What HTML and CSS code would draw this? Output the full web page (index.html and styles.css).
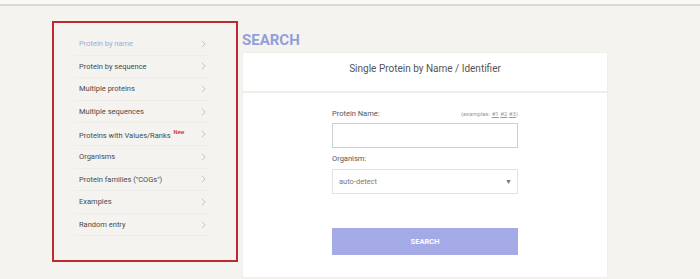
FILE: index.html
```html
<!DOCTYPE html>
<html>
<head>
<meta charset="utf-8">
<link rel="stylesheet" href="styles.css">
</head>
<body>
<div class="topbar"></div>
<div class="main">
  <nav class="sidebar">
    <ul class="menu">
      <li class="item active"><span>Protein by name</span><svg class="chev" viewBox="0 0 6 10"><polyline points="1,1 5,5 1,9"/></svg></li>
      <li class="item"><span>Protein by sequence</span><svg class="chev" viewBox="0 0 6 10"><polyline points="1,1 5,5 1,9"/></svg></li>
      <li class="item"><span>Multiple proteins</span><svg class="chev" viewBox="0 0 6 10"><polyline points="1,1 5,5 1,9"/></svg></li>
      <li class="item"><span>Multiple sequences</span><svg class="chev" viewBox="0 0 6 10"><polyline points="1,1 5,5 1,9"/></svg></li>
      <li class="item"><span>Proteins with Values/Ranks <sup class="new">New</sup></span><svg class="chev" viewBox="0 0 6 10"><polyline points="1,1 5,5 1,9"/></svg></li>
      <li class="item"><span>Organisms</span><svg class="chev" viewBox="0 0 6 10"><polyline points="1,1 5,5 1,9"/></svg></li>
      <li class="item"><span>Protein families ("COGs")</span><svg class="chev" viewBox="0 0 6 10"><polyline points="1,1 5,5 1,9"/></svg></li>
      <li class="item"><span>Examples</span><svg class="chev" viewBox="0 0 6 10"><polyline points="1,1 5,5 1,9"/></svg></li>
      <li class="item"><span>Random entry</span><svg class="chev" viewBox="0 0 6 10"><polyline points="1,1 5,5 1,9"/></svg></li>
    </ul>
  </nav>
  <section class="content">
    <h1 class="heading">SEARCH</h1>
    <div class="card">
      <div class="card-head">Single Protein by Name / Identifier</div>
      <form class="form">
        <div class="label-row">
          <label class="label">Protein Name:</label>
          <span class="examples">(examples: <a>#1</a> <a>#2</a> <a>#3</a>)</span>
        </div>
        <div class="input"></div>
        <div class="label-row organism">
          <label class="label">Organism:</label>
        </div>
        <div class="select"><span>auto-detect</span><span class="arrow">▼</span></div>
        <div class="button">SEARCH</div>
      </form>
    </div>
  </section>
</div>
</body>
</html>
```
FILE: styles.css
```css
* { box-sizing: border-box; }
body {
  margin: 0;
  background: #f5f3ef;
  font-family: Roboto, "Liberation Sans", sans-serif;
  color: #444;
  height: 279px;
  overflow: hidden;
}
.topbar {
  height: 6px;
  background: #faf9f6;
  border-bottom: 2px solid #dcd9d3;
}
.main {
  display: flex;
  padding: 15px 0 0 52px;
  gap: 4px;
}
.sidebar {
  width: 186px;
  height: 241px;
  border: 2px solid #c0282e;
  padding: 10px 0 0 20px;
}
.menu {
  list-style: none;
  margin: 0;
  padding: 0;
  width: 136px;
}
.item {
  display: flex;
  align-items: center;
  justify-content: space-between;
  height: 22.6px;
  padding: 0 4px 0 5px;
  font-size: 7.5px;
  color: #4a4a4a;
  border-bottom: 1px solid #eeece7;
}
.item.active { color: #a3a8dc; }
.new {
  color: #d2232a;
  font-size: 5.5px;
  font-weight: 500;
  vertical-align: 4px;
  margin-left: 1px;
}
.chev {
  width: 5px;
  height: 8px;
  fill: none;
  stroke: #b9b7b3;
  stroke-width: 1;
}
.content {
  width: 366px;
}
.heading {
  margin: 10px 0 3px 0;
  font-size: 15px;
  line-height: 18px;
  font-weight: 700;
  color: #939fd9;
}
.card {
  background: #fff;
  border: 1px solid #efeeeb;
  height: 226px;
}
.card-head {
  height: 40px;
  padding-top: 9px;
  text-align: center;
  font-size: 10px;
  line-height: 14px;
  color: #555;
  border-bottom: 2px solid #efeeeb;
}
.form {
  width: 186px;
  margin: 0 auto;
  padding-top: 15px;
}
.label-row {
  display: flex;
  justify-content: space-between;
  align-items: baseline;
  height: 12px;
  line-height: 12px;
  margin-bottom: 3px;
}
.label-row.organism { margin-top: 5px; margin-bottom: 4px; }
.label {
  font-size: 7.5px;
  color: #555;
}
.examples {
  font-size: 6px;
  color: #9a9a9a;
}
.examples a { text-decoration: underline; color: #9a9a9a; }
.input {
  height: 25px;
  border: 1px solid #cfcfcf;
}
.select {
  height: 25px;
  border: 1px solid #e2e2e2;
  display: flex;
  align-items: center;
  justify-content: space-between;
  padding: 0 5px 0 6px;
  font-size: 7.5px;
  color: #7a7a7a;
}
.arrow { font-size: 7px; color: #777; }
.button {
  margin-top: 34px;
  height: 27px;
  background: #a3aae6;
  color: #fff;
  font-size: 7.5px;
  font-weight: 700;
  display: flex;
  align-items: center;
  justify-content: center;
}
```
